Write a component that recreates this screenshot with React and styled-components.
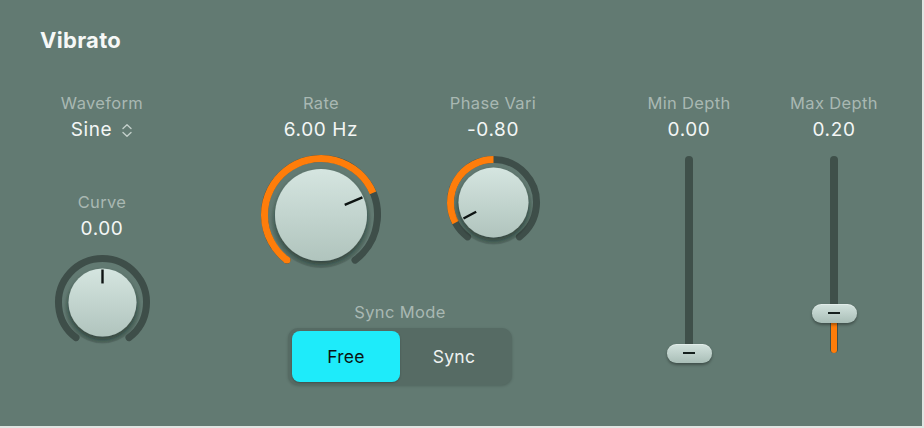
import React, { useId } from "react";
import styled, { createGlobalStyle } from "styled-components";

const Global = createGlobalStyle`
  html, body { margin: 0; padding: 0; background: #dfe5e2; }
  body { font-family: Inter, "Noto Sans", "Liberation Sans", sans-serif; }
`;

const Panel = styled.div`
  width: 922px;
  height: 426px;
  background: #627a72;
  box-sizing: border-box;
  padding-top: 28px;
  overflow: hidden;
`;

const Title = styled.h1`
  margin: 0 0 0 40px;
  font-size: 22px;
  line-height: 24px;
  font-weight: 700;
  color: #f6f8f7;
  letter-spacing: 0.3px;
`;

const Row = styled.div`
  display: flex;
  align-items: flex-start;
  margin-top: 40px;
  padding-left: 32px;
`;

const Column = styled.div`
  width: ${(p) => p.$w || 140}px;
  display: flex;
  flex-direction: column;
  align-items: center;
  margin-left: ${(p) => p.$gap || 0}px;
  flex-shrink: 0;
`;

const Group = styled.div`
  display: flex;
  flex-direction: column;
  align-items: center;
  margin-left: ${(p) => p.$gap || 0}px;
`;

const KnobRow = styled.div`
  display: flex;
  align-items: flex-start;
  gap: 32px;
`;

const Label = styled.div`
  font-size: 16.5px;
  line-height: 22px;
  color: #a9b8b2;
  white-space: nowrap;
  letter-spacing: 0.35px;
  margin-top: ${(p) => p.$mt || 0}px;
`;

const Value = styled.div`
  font-size: 19px;
  line-height: 32px;
  color: #f3f6f5;
  white-space: nowrap;
  display: flex;
  align-items: center;
  gap: 9px;
  letter-spacing: 0.6px;
`;

const KnobWrap = styled.div`
  margin-top: ${(p) => p.$mt || 0}px;
  line-height: 0;
`;

const SyncBlock = styled.div`
  display: flex;
  flex-direction: column;
  align-items: center;
  margin-top: 20px;
  margin-right: 14px;
`;

const Segmented = styled.div`
  margin-top: 5px;
  width: 224px;
  height: 57px;
  box-sizing: border-box;
  padding: 3px 4px;
  border-radius: 10px;
  background: #566b64;
  box-shadow: 0 1px 3px rgba(0, 0, 0, 0.18);
  display: flex;
`;

const Segment = styled.div`
  flex: 1;
  border-radius: 8px;
  display: flex;
  align-items: center;
  justify-content: center;
  font-size: 17.5px;
  letter-spacing: 0.3px;
  color: ${(p) => (p.$active ? "#0b1414" : "#eef2f1")};
  background: ${(p) => (p.$active ? "#1eebfa" : "transparent")};
  box-shadow: ${(p) => (p.$active ? "0 1px 2px rgba(0,0,0,0.25)" : "none")};
`;

const SliderArea = styled.div`
  position: relative;
  margin-top: 10px;
  width: 50px;
  height: 210px;
  display: flex;
  justify-content: center;
`;

const Rail = styled.div`
  width: 8px;
  height: 197px;
  border-radius: 4px;
  background: #3f504a;
  position: relative;
`;

const Fill = styled.div`
  position: absolute;
  left: 1px;
  right: 1px;
  bottom: 0;
  border-radius: 3px;
  background: #ff7d0a;
`;

const Thumb = styled.div`
  position: absolute;
  left: 50%;
  width: 45px;
  height: 19px;
  margin-left: -22.5px;
  margin-top: -9.5px;
  border-radius: 9.5px;
  background: linear-gradient(#d3e3de, #a9beb7);
  box-shadow: 0 2px 3px rgba(0, 0, 0, 0.35), inset 0 1px 0 rgba(255, 255, 255, 0.35);
  display: flex;
  align-items: center;
  justify-content: center;
  &::after {
    content: "";
    width: 12px;
    height: 2px;
    background: #15201d;
  }
`;

const pt = (c, r, a) => {
  const rad = (a * Math.PI) / 180;
  return [c + r * Math.sin(rad), c - r * Math.cos(rad)];
};
const arc = (c, r, a1, a2) => {
  const [x1, y1] = pt(c, r, a1);
  const [x2, y2] = pt(c, r, a2);
  const large = a2 - a1 > 180 ? 1 : 0;
  return `M${x1} ${y1} A${r} ${r} 0 ${large} 1 ${x2} ${y2}`;
};

function Knob({ outerR, knobR, angle, from }) {
  const id = useId().replace(/:/g, "");
  const stroke = 7;
  const pad = 6;
  const size = outerR * 2 + pad * 2;
  const c = outerR + pad;
  const rr = outerR - stroke / 2;
  const minA = -143;
  const maxA = 143;
  const [ix1, iy1] = pt(c, knobR * 0.56, angle);
  const [ix2, iy2] = pt(c, knobR - 1, angle);
  let fill = null;
  if (from !== undefined && Math.abs(angle - from) > 0.5) {
    const a1 = Math.min(from, angle);
    const a2 = Math.max(from, angle);
    const startCap = a1 === minA;
    const [sx, sy] = pt(c, rr, minA);
    fill = (
      <>
        <path d={arc(c, rr, a1, a2)} stroke="#ff7d0a" strokeWidth={stroke} fill="none" strokeLinecap="butt" />
        {startCap && <circle cx={sx} cy={sy} r={stroke / 2} fill="#ff7d0a" />}
      </>
    );
  }
  return (
    <svg width={size} height={size} viewBox={`0 0 ${size} ${size}`}>
      <defs>
        <linearGradient id={`g${id}`} x1="0" y1="0" x2="0" y2="1">
          <stop offset="0" stopColor="#d5e5e0" />
          <stop offset="1" stopColor="#b0c4bd" />
        </linearGradient>
        <radialGradient id={`s${id}`} cx="0.5" cy="0.55" r="0.5">
          <stop offset="0.8" stopColor="rgba(30,45,40,0.35)" />
          <stop offset="1" stopColor="rgba(30,45,40,0)" />
        </radialGradient>
        <filter id={`f${id}`} x="-30%" y="-30%" width="160%" height="160%">
          <feDropShadow dx="0" dy="3" stdDeviation="2.5" floodColor="#1c2a26" floodOpacity="0.45" />
        </filter>
      </defs>
      <path d={arc(c, rr, minA, maxA)} stroke="#3e4e49" strokeWidth={stroke} fill="none" strokeLinecap="round" />
      {fill}
      <circle cx={c} cy={c + 2} r={knobR + 5} fill={`url(#s${id})`} />
      <circle cx={c} cy={c} r={knobR} fill={`url(#g${id})`} filter={`url(#f${id})`} />
      <line x1={ix1} y1={iy1} x2={ix2} y2={iy2} stroke="#0d1412" strokeWidth="2.4" />
    </svg>
  );
}

function UpDown() {
  return (
    <svg width="12" height="15" viewBox="0 0 12 15">
      <path d="M2 5.5 L6 1.8 L10 5.5 M2 9.5 L6 13.2 L10 9.5" stroke="#c3cfca" strokeWidth="1.4" fill="none" strokeLinecap="round" strokeLinejoin="round" />
    </svg>
  );
}

function Slider({ value }) {
  const travel = 200;
  const center = 197 - value * travel;
  return (
    <SliderArea>
      <Rail>
        {value > 0 && <Fill style={{ height: `${197 - center}px` }} />}
      </Rail>
      <Thumb style={{ top: `${center}px` }} />
    </SliderArea>
  );
}

export default function App() {
  return (
    <>
      <Global />
      <Panel>
        <Title>Vibrato</Title>
        <Row>
          <Column $w={140}>
            <Label>Waveform</Label>
            <Value>
              Sine <UpDown />
            </Value>
            <Label $mt={45}>Curve</Label>
            <Value>0.00</Value>
            <KnobWrap $mt={4}>
              <Knob outerR={47.5} knobR={34} angle={0} from={0} />
            </KnobWrap>
          </Column>
          <Group $gap={79}>
            <KnobRow>
              <Column $w={140}>
                <Label>Rate</Label>
                <Value>6.00 Hz</Value>
                <KnobWrap $mt={3}>
                  <Knob outerR={60} knobR={46} angle={67} from={-143} />
                </KnobWrap>
              </Column>
              <Column $w={140}>
                <Label>Phase Vari</Label>
                <Value>-0.80</Value>
                <KnobWrap $mt={4}>
                  <Knob outerR={46.5} knobR={35} angle={-118} from={0} />
                </KnobWrap>
              </Column>
            </KnobRow>
            <SyncBlock>
              <Label>Sync Mode</Label>
              <Segmented>
                <Segment $active>Free</Segment>
                <Segment>Sync</Segment>
              </Segmented>
            </SyncBlock>
          </Group>
          <Column $w={120} $gap={66}>
            <Label>Min Depth</Label>
            <Value>0.00</Value>
            <Slider value={0} />
          </Column>
          <Column $w={120} $gap={25}>
            <Label>Max Depth</Label>
            <Value>0.20</Value>
            <Slider value={0.2} />
          </Column>
        </Row>
      </Panel>
    </>
  );
}
